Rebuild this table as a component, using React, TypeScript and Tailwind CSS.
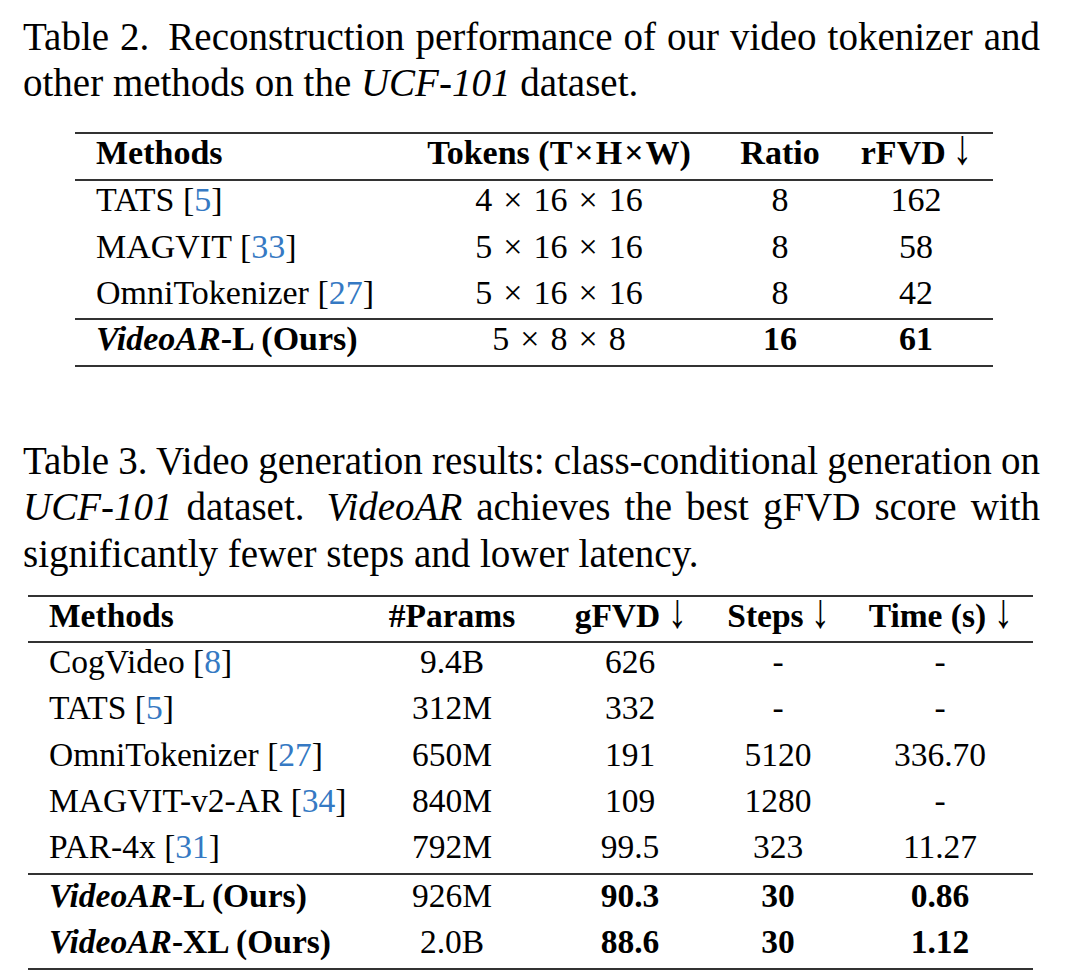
import type { ReactNode } from 'react'

const serif = { fontFamily: '"Liberation Serif", "Times New Roman", serif' }

function Cite({ n }: { n: string }) {
  return (
    <>
      [<span className="text-[#3579c3]">{n}</span>]
    </>
  )
}

function Ours({ size }: { size: string }) {
  return (
    <span className="font-bold">
      <i>VideoAR</i>-{size} (Ours)
    </span>
  )
}

function Dims({ parts }: { parts: string[] }) {
  return (
    <>
      {parts.map((p, i) => (
        <span key={i}>
          {i > 0 && <span className="mx-[11px]">×</span>}
          {p}
        </span>
      ))}
    </>
  )
}

function Arrow() {
  return (
    <span className="font-normal">
      {' '}
      <span className="inline-block origin-[50%_78%] scale-x-[1.15] scale-y-[1.45]">↓</span>
    </span>
  )
}

function Rule() {
  return <div className="h-[2px] bg-[#333]" />
}

interface RowProps {
  cols: string
  cells: ReactNode[]
}

function Row({ cols, cells }: RowProps) {
  return (
    <div className={`grid ${cols} leading-[38px] whitespace-nowrap`}>
      {cells.map((c, i) => (
        <div key={i} className={i === 0 ? 'text-left pl-[21px]' : 'text-center'}>
          {c}
        </div>
      ))}
    </div>
  )
}

const cols1 = 'grid-cols-[322px_324px_118px_154px]'
const cols2 = 'grid-cols-[325px_198px_158px_138px_186px]'

export default function App() {
  return (
    <div className="w-[1080px] h-[979px] bg-white text-black overflow-hidden" style={serif}>
      {/* Table 2 caption */}
      <div className="pt-[13.6px] pl-[23px] w-[1040px] text-[39px] leading-[46.5px]">
        <div className="text-justify [text-align-last:justify] [word-spacing:-3px]">
          Table 2.<span className="inline-block w-[8px]" /> Reconstruction performance of our video tokenizer and
        </div>
        <div>
          other methods on the <i>UCF-101</i> dataset.
        </div>
      </div>

      {/* Table 2 */}
      <div className="ml-[75px] w-[918px] mt-[25.4px] text-[34px]">
        <Rule />
        <div className="pt-[0.5px] pb-[6.5px] font-bold">
          <Row
            cols={cols1}
            cells={[
              'Methods',
              <>
                Tokens (T<span className="mx-[2px]">×</span>H<span className="mx-[2px]">×</span>W)
              </>,
              'Ratio',
              <>
                rFVD<Arrow />
              </>,
            ]}
          />
        </div>
        <Rule />
        <div className="pt-[0.5px] pb-[5.5px] flex flex-col gap-[8.5px]">
          <Row cols={cols1} cells={[<>TATS <Cite n="5" /></>, <Dims parts={['4', '16', '16']} />, '8', '162']} />
          <Row cols={cols1} cells={[<>MAGVIT <Cite n="33" /></>, <Dims parts={['5', '16', '16']} />, '8', '58']} />
          <Row cols={cols1} cells={[<>OmniTokenizer <Cite n="27" /></>, <Dims parts={['5', '16', '16']} />, '8', '42']} />
        </div>
        <Rule />
        <div className="pt-0 pb-[7px]">
          <Row
            cols={cols1}
            cells={[
              <Ours size="L" />,
              <Dims parts={['5', '8', '8']} />,
              <b>16</b>,
              <b>61</b>,
            ]}
          />
        </div>
        <Rule />
      </div>

      {/* Table 3 caption */}
      <div className="mt-[70.6px] pl-[23px] w-[1040px] text-[39px] leading-[46.5px]">
        <div className="text-justify [text-align-last:justify] [word-spacing:-3px]">
          Table 3. Video generation results: class-conditional generation on
        </div>
        <div className="text-justify [text-align-last:justify] [word-spacing:-3px]">
          <i>UCF-101</i> dataset.<span className="inline-block w-[8px]" /> <i>VideoAR</i> achieves the best gFVD score with
        </div>
        <div>significantly fewer steps and lower latency.</div>
      </div>

      {/* Table 3 */}
      <div className="ml-[28px] w-[1005px] mt-[18px] text-[33.5px]">
        <Rule />
        <div className="pt-0 pb-[6px] font-bold">
          <Row
            cols={cols2}
            cells={[
              'Methods',
              '#Params',
              <>gFVD<Arrow /></>,
              <>Steps<Arrow /></>,
              <>Time (s)<Arrow /></>,
            ]}
          />
        </div>
        <Rule />
        <div className="pt-0 pb-[7px] flex flex-col gap-[8.25px]">
          <Row cols={cols2} cells={[<>CogVideo <Cite n="8" /></>, '9.4B', '626', '-', '-']} />
          <Row cols={cols2} cells={[<>TATS <Cite n="5" /></>, '312M', '332', '-', '-']} />
          <Row cols={cols2} cells={[<>OmniTokenizer <Cite n="27" /></>, '650M', '191', '5120', '336.70']} />
          <Row cols={cols2} cells={[<>MAGVIT-v2-AR <Cite n="34" /></>, '840M', '109', '1280', '-']} />
          <Row cols={cols2} cells={[<>PAR-4x <Cite n="31" /></>, '792M', '99.5', '323', '11.27']} />
        </div>
        <Rule />
        <div className="pt-[1.5px] pb-[7.5px] flex flex-col gap-[8px]">
          <Row cols={cols2} cells={[<Ours size="L" />, '926M', <b>90.3</b>, <b>30</b>, <b>0.86</b>]} />
          <Row cols={cols2} cells={[<Ours size="XL" />, '2.0B', <b>88.6</b>, <b>30</b>, <b>1.12</b>]} />
        </div>
        <Rule />
      </div>
    </div>
  )
}
